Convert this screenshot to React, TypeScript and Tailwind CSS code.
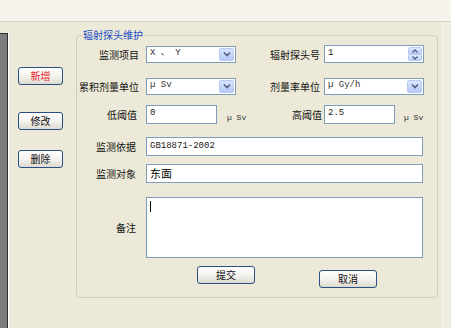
import React from 'react';

const cjk = { fontFamily: '"Noto Sans CJK SC", "Noto Sans", sans-serif' };
const mono = { fontFamily: '"Liberation Mono", "Noto Sans CJK SC", monospace' };

function ArrowBox() {
  return (
    <div className="w-[15px] h-[13px] mr-[1px] rounded-[2px] border border-[#b9cbf3] bg-gradient-to-b from-[#dbe6fe] to-[#b5c9f7] flex items-center justify-center">
      <svg width="8" height="6" viewBox="0 0 8 6">
        <path d="M1 1.5 L4 4.5 L7 1.5" fill="none" stroke="#4d6185" strokeWidth="1.6" />
      </svg>
    </div>
  );
}

function Select({ value, width }: { value: string; width: string }) {
  return (
    <div className={`${width} h-[17px] bg-white border border-[#7f9db9] flex items-center justify-between`}>
      <span className="pl-[3px] text-[9px] text-[#333] whitespace-pre" style={mono}>
        {value}
      </span>
      <ArrowBox />
    </div>
  );
}

function Spinner({ value }: { value: string }) {
  return (
    <div className="w-[100px] h-[18px] bg-white border border-[#7f9db9] flex items-center justify-between">
      <span className="pl-[3px] text-[9px] text-[#222]" style={mono}>
        {value}
      </span>
      <div className="flex flex-col mr-[1px]">
        <div className="w-[14px] h-[7px] rounded-t-[2px] border border-[#b9cbf3] bg-gradient-to-b from-[#e1eafe] to-[#bcd0f8] flex items-center justify-center">
          <svg width="6" height="4" viewBox="0 0 6 4">
            <path d="M0.5 3.5 L3 1 L5.5 3.5" fill="none" stroke="#4d6185" strokeWidth="1.3" />
          </svg>
        </div>
        <div className="w-[14px] h-[7px] rounded-b-[2px] border border-[#b9cbf3] bg-gradient-to-b from-[#e1eafe] to-[#bcd0f8] flex items-center justify-center">
          <svg width="6" height="4" viewBox="0 0 6 4">
            <path d="M0.5 0.5 L3 3 L5.5 0.5" fill="none" stroke="#4d6185" strokeWidth="1.3" />
          </svg>
        </div>
      </div>
    </div>
  );
}

function TextBox({ value, width, cjkText }: { value: string; width: string; cjkText?: boolean }) {
  return (
    <div className={`${width} h-[19px] bg-white border border-[#7f9db9] flex items-center`}>
      <span
        className={cjkText ? 'pl-[3px] text-[11px] text-black' : 'pl-[3px] text-[9px] text-[#222]'}
        style={cjkText ? cjk : mono}
      >
        {value}
      </span>
    </div>
  );
}

function XpButton({ label, red, width }: { label: string; red?: boolean; width: string }) {
  return (
    <button
      className={`${width} h-[18px] rounded-[3px] border border-[#2a4f84] bg-gradient-to-b from-white via-[#f4f3ee] to-[#dcdad0] text-[10px] leading-none flex items-center justify-center ${
        red ? 'text-[#e8262a]' : 'text-[#111]'
      }`}
      style={cjk}
    >
      {label}
    </button>
  );
}

function Label({ text, width }: { text: string; width: string }) {
  return (
    <span className={`${width} text-right text-[10px] text-[#111] shrink-0 whitespace-nowrap`} style={cjk}>
      {text}
    </span>
  );
}

function Unit() {
  return (
    <span className="text-[8px] text-[#333] whitespace-pre" style={mono}>
      µ Sv
    </span>
  );
}

export default function App() {
  return (
    <div className="w-[451px] h-[333px] bg-white flex flex-col overflow-hidden">
      <div className="h-[22px] shrink-0 bg-[#f5f3eb] border-b border-[#d6d2c3]" />
      <div className="h-[306px] shrink-0 bg-[#ece9d8] flex">
        {/* dark side bar */}
        <div className="mt-[11px] flex">
          <div className="w-[8px] bg-[#7d7d7d] border-t border-r border-[#2e2e2e]" />
          <div className="w-px bg-white" />
        </div>

        {/* action buttons */}
        <div className="ml-[9px] pt-[45px] flex flex-col">
          <XpButton label="新增" red width="w-[45px]" />
          <div className="mt-[27px]">
            <XpButton label="修改" width="w-[45px]" />
          </div>
          <div className="mt-[20px]">
            <XpButton label="删除" width="w-[45px]" />
          </div>
        </div>

        {/* form */}
        <fieldset className="ml-[13px] mt-[7px] w-[362px] h-[269px] border border-[#d0cdbd] rounded-[4px] px-0">
          <legend className="ml-[5px] px-[1px] text-[10px] leading-[12px] text-[#1a4cc4]" style={cjk}>
            辐射探头维护
          </legend>

          <div className="flex items-center mt-[4px] h-[18px]">
            <div className="w-[159px] flex items-center">
              <Label text="监测项目" width="w-[62px]" />
              <div className="ml-[7px]">
                <Select value="X 、 Y" width="w-[90px]" />
              </div>
            </div>
            <Label text="辐射探头号" width="w-[84px]" />
            <div className="ml-[4px]">
              <Spinner value="1" />
            </div>
          </div>

          <div className="flex items-center mt-[14px] h-[18px]">
            <div className="w-[159px] flex items-center">
              <Label text="累积剂量单位" width="w-[62px]" />
              <div className="ml-[7px]">
                <Select value="µ Sv" width="w-[90px]" />
              </div>
            </div>
            <Label text="剂量率单位" width="w-[84px]" />
            <div className="ml-[4px]">
              <Select value="µ Gy/h" width="w-[100px]" />
            </div>
          </div>

          <div className="flex items-center mt-[9px] h-[20px]">
            <div className="w-[159px] flex items-center">
              <Label text="低阈值" width="w-[60px]" />
              <div className="ml-[9px]">
                <TextBox value="0" width="w-[71px]" />
              </div>
              <span className="ml-[10px]">
                <Unit />
              </span>
            </div>
            <Label text="高阈值" width="w-[86px]" />
            <div className="ml-[2px]">
              <TextBox value="2.5" width="w-[71px]" />
            </div>
            <span className="ml-[9px]">
              <Unit />
            </span>
          </div>

          <div className="flex items-center mt-[13px]">
            <Label text="监测依据" width="w-[59px]" />
            <div className="ml-[10px]">
              <TextBox value="GB18871-2002" width="w-[277px]" />
            </div>
          </div>

          <div className="flex items-center mt-[8px]">
            <Label text="监测对象" width="w-[59px]" />
            <div className="ml-[10px]">
              <TextBox value="东面" width="w-[277px]" cjkText />
            </div>
          </div>

          <div className="flex items-center mt-[14px]">
            <Label text="备注" width="w-[59px]" />
            <div className="ml-[10px] w-[277px] h-[61px] bg-white border border-[#7f9db9] pl-[3px] pt-[3px]">
              <div className="w-px h-[11px] bg-black" />
            </div>
          </div>

          <div className="flex items-start mt-[8px]">
            <div className="ml-[120px]">
              <XpButton label="提交" width="w-[58px]" />
            </div>
            <div className="ml-[64px] mt-[4px]">
              <XpButton label="取消" width="w-[58px]" />
            </div>
          </div>
        </fieldset>

        <div className="ml-[4px] w-px bg-[#f9f8f3]" />
        <div className="flex-1 bg-[#efece0]" />
      </div>
    </div>
  );
}
